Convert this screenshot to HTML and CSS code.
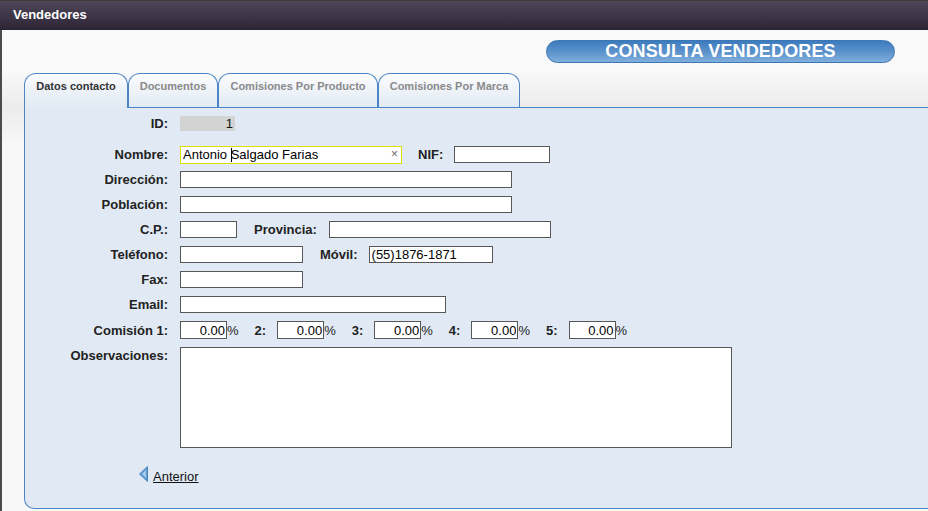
FILE: index.html
```html
<!DOCTYPE html>
<html lang="es">
<head>
<meta charset="utf-8">
<title>Vendedores</title>
<link rel="stylesheet" href="styles.css">
</head>
<body>
<div class="window">
  <div class="titlebar">Vendedores</div>
  <div class="content">
    <div class="header-row">
      <div class="page-title">CONSULTA VENDEDORES</div>
    </div>
    <div class="tabs">
      <div class="tab active">Datos contacto</div>
      <div class="tab">Documentos</div>
      <div class="tab">Comisiones Por Producto</div>
      <div class="tab">Comisiones Por Marca</div>
    </div>
    <div class="panel">
      <div class="row row-id">
        <label class="lbl">ID:</label>
        <div class="id-box">1</div>
      </div>
      <div class="row">
        <label class="lbl">Nombre:</label>
        <div class="search-wrap">
          <input class="inp inp-nombre" type="text" value="Antonio Salgado Farias">
          <span class="caret"></span>
          <span class="clear">×</span>
        </div>
        <label class="lbl-inline lbl-nif">NIF:</label>
        <input class="inp w-96" type="text" value="">
      </div>
      <div class="row">
        <label class="lbl">Dirección:</label>
        <input class="inp w-332" type="text" value="">
      </div>
      <div class="row">
        <label class="lbl">Población:</label>
        <input class="inp w-332" type="text" value="">
      </div>
      <div class="row">
        <label class="lbl">C.P.:</label>
        <input class="inp w-57" type="text" value="">
        <label class="lbl-inline lbl-prov">Provincia:</label>
        <input class="inp w-222" type="text" value="">
      </div>
      <div class="row">
        <label class="lbl">Teléfono:</label>
        <input class="inp w-123" type="text" value="">
        <label class="lbl-inline lbl-movil">Móvil:</label>
        <input class="inp w-124" type="text" value="(55)1876-1871">
      </div>
      <div class="row">
        <label class="lbl">Fax:</label>
        <input class="inp w-123" type="text" value="">
      </div>
      <div class="row">
        <label class="lbl">Email:</label>
        <input class="inp w-266" type="text" value="">
      </div>
      <div class="row row-com">
        <label class="lbl">Comisión 1:</label>
        <input class="inp pct" type="text" value="0.00"><span class="pct-sign">%</span>
        <label class="lbl-inline lbl-n">2:</label>
        <input class="inp pct" type="text" value="0.00"><span class="pct-sign">%</span>
        <label class="lbl-inline lbl-n">3:</label>
        <input class="inp pct" type="text" value="0.00"><span class="pct-sign">%</span>
        <label class="lbl-inline lbl-n">4:</label>
        <input class="inp pct" type="text" value="0.00"><span class="pct-sign">%</span>
        <label class="lbl-inline lbl-n">5:</label>
        <input class="inp pct" type="text" value="0.00"><span class="pct-sign">%</span>
      </div>
      <div class="row row-obs">
        <label class="lbl">Observaciones:</label>
        <textarea class="obs"></textarea>
      </div>
      <div class="nav-row">
        <svg class="prev-icon" width="9" height="16" viewBox="0 0 9 16">
          <polygon points="8.5,0.5 8.5,15.5 0.5,8" fill="#5d9bd3" stroke="#4a86c0" stroke-width="1"/>
          <polygon points="7,4 7,12 3,8" fill="#a9cbea"/>
        </svg>
        <a class="prev-link" href="#">Anterior</a>
      </div>
    </div>
  </div>
</div>
</body>
</html>
```
FILE: styles.css
```css
* { box-sizing: border-box; }
html, body {
  margin: 0;
  padding: 0;
  width: 928px;
  height: 511px;
  overflow: hidden;
  font-family: "Liberation Sans", Arial, sans-serif;
  background: #f9f9f9;
}
.window {
  height: 511px;
  border-left: 2px solid #4b4b4b;
  display: flex;
  flex-direction: column;
}
.titlebar {
  height: 30px;
  border-top: 1px solid #3a3a3a;
  background: linear-gradient(to bottom, #4f4759 0%, #3e3548 50%, #2c2434 100%);
  color: #ffffff;
  font-weight: bold;
  font-size: 13px;
  line-height: 28px;
  margin-left: -2px;
  padding-left: 13px;
}
.content {
  flex: 1;
  padding-left: 22px;
  background: linear-gradient(to bottom, #f9f9f9 0px, #f9f9f9 40px, #ececec 77px, #f1f1f1 95px, #f8f8f8 115px, #f8f8f8 100%);
  display: flex;
  flex-direction: column;
}
.header-row {
  display: flex;
  justify-content: flex-end;
  padding-right: 33px;
  margin-top: 10px;
}
.page-title {
  width: 349px;
  height: 23px;
  border: 1px solid #3b76b5;
  border-radius: 12px;
  background: linear-gradient(to bottom, #3d7bbd 0%, #5a91cb 50%, #80afdc 100%);
  color: #ffffff;
  font-weight: bold;
  font-size: 18px;
  line-height: 21px;
  text-align: center;
  letter-spacing: 0.15px;
}
.tabs {
  display: flex;
  align-items: flex-end;
  margin-top: 10px;
  height: 34px;
  position: relative;
  z-index: 2;
}
.tab {
  height: 34px;
  padding: 5px 0 0 0;
  text-align: center;
  border: 1px solid #4a86c6;
  border-bottom: none;
  border-radius: 12px 12px 0 0;
  background: linear-gradient(to bottom, #fdfdfe 0%, #eef3f9 50%, #e2eaf4 100%);
  color: #8a8a8a;
  font-weight: bold;
  font-size: 11px;
  line-height: 14px;
  white-space: nowrap;
}
.tab.active {
  height: 35px;
  margin-bottom: -1px;
  color: #333333;
  background: linear-gradient(to bottom, #fdfdfe 0%, #edf2f8 45%, #e1eaf4 100%);
  width: 104px;
}
.tab:nth-child(2) { width: 90px; }
.tab:nth-child(3) { width: 160px; }
.tab:nth-child(4) { width: 142px; }
.panel {
  height: 402px;
  border: 1px solid #4a86c6;
  border-right: none;
  border-radius: 0 0 0 10px;
  background: #e1eaf4;
  padding-top: 8px;
  margin-right: -10px;
}
.row {
  display: flex;
  align-items: center;
  height: 17px;
  margin-bottom: 8px;
  font-size: 13px;
}
.row-id {
  height: 15px;
  margin-bottom: 15px;
}
.lbl {
  width: 143px;
  text-align: right;
  font-weight: bold;
  font-size: 13px;
  color: #222222;
  margin-right: 12px;
  flex-shrink: 0;
}
.lbl-inline {
  font-weight: bold;
  font-size: 13px;
  color: #222222;
  margin-right: 12px;
}
.lbl-nif { margin-left: 16px; margin-right: 11px; }
.lbl-prov { margin-left: 17px; margin-right: 12px; }
.lbl-movil { margin-left: 17px; margin-right: 11px; }
.id-box {
  width: 55px;
  height: 15px;
  background: #d3d3d3;
  text-align: right;
  font-size: 13px;
  line-height: 15px;
  padding-right: 2px;
  color: #111;
}
.inp {
  height: 17px;
  border: 1px solid #575757;
  background: #ffffff;
  font-family: "Liberation Sans", Arial, sans-serif;
  font-size: 13px;
  color: #000;
  padding: 0 2px;
  margin: 0;
  outline: none;
  border-radius: 0;
}
.search-wrap {
  position: relative;
  width: 222px;
  height: 18px;
  flex-shrink: 0;
}
.inp-nombre {
  width: 222px;
  height: 18px;
  border: 1px solid #dede00;
  padding-right: 16px;
}
.caret {
  position: absolute;
  left: 51px;
  top: 2px;
  width: 1px;
  height: 14px;
  background: #000;
}
.clear {
  position: absolute;
  right: 4px;
  top: 0;
  font-size: 12px;
  line-height: 17px;
  color: #6e6e6e;
}
.w-96 { width: 96px; }
.w-332 { width: 332px; }
.w-57 { width: 57px; }
.w-222 { width: 222px; }
.w-123 { width: 123px; }
.w-124 { width: 124px; }
.w-266 { width: 266px; }
.row-com { height: 18px; margin-bottom: 8px; }
.pct {
  width: 47px;
  height: 18px;
  text-align: right;
  padding-right: 1px;
}
.pct-sign {
  font-size: 13px;
  color: #222;
  margin-right: 16px;
}
.lbl-n { margin-right: 11px; }
.row-obs {
  align-items: flex-start;
  height: 101px;
}
.row-obs .lbl { line-height: 17px; }
.obs {
  width: 552px;
  height: 101px;
  border: 1px solid #575757;
  background: #ffffff;
  resize: none;
  margin: 0;
  outline: none;
}
.nav-row {
  display: flex;
  align-items: center;
  margin-top: 18px;
  padding-left: 114px;
  height: 16px;
}
.prev-icon {
  display: block;
  margin-right: 5px;
}
.prev-link {
  font-size: 13px;
  color: #111111;
  text-decoration: underline;
  margin-top: 5px;
}
```
